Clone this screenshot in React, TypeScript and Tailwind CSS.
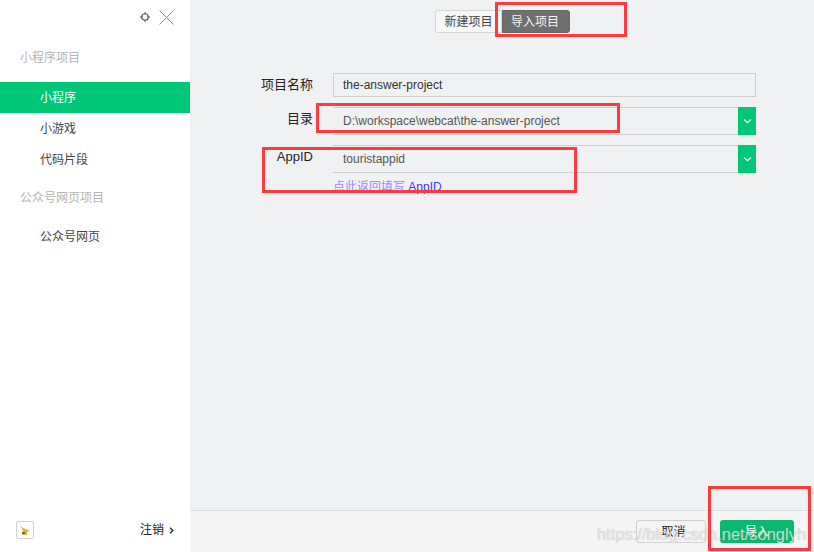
import React from "react";

const font = { fontFamily: '"Liberation Sans", "Noto Sans CJK SC", sans-serif' };

function Chevron() {
  return (
    <div className="-my-px flex w-[18px] shrink-0 items-center justify-center bg-[#00c777]">
      <svg width="9" height="6" viewBox="0 0 9 6" fill="none">
        <path d="M1 1.5 L4.5 4.5 L8 1.5" stroke="#e8fff5" strokeWidth="1.4" />
      </svg>
    </div>
  );
}

function Row({ label, children, className }: { label: string; children: React.ReactNode; className?: string }) {
  return (
    <div className={`flex ${className ?? ""}`}>
      <div className="w-[313px] shrink-0 text-right text-[13px] leading-[24px] text-[#222]">{label}</div>
      <div className="ml-5 w-[423px]">{children}</div>
    </div>
  );
}

function RedBox({ className }: { className: string }) {
  return <div className={`pointer-events-none absolute border-[3px] border-[#fd3a3d] ${className}`} />;
}

export default function App() {
  return (
    <div style={font} className="relative flex h-[552px] w-[814px] overflow-hidden bg-[#f0f1f3]">
      <aside className="flex w-[190px] shrink-0 flex-col bg-white">
        <div className="flex h-[33px] items-start justify-end pr-[16px] pt-[10px]">
          <svg className="mr-[9px] mt-[2px]" width="10" height="10" viewBox="0 0 10 10" fill="none" stroke="#4d4d4d">
            <rect x="2" y="2" width="6" height="6" rx="2" strokeWidth="1.2" />
            <path d="M5 0V2 M5 8V10 M0 5H2 M8 5H10" strokeWidth="1" />
          </svg>
          <svg width="15" height="15" viewBox="0 0 15 15" fill="none" stroke="#8c8c8c">
            <path d="M0.5 0.5 L14.5 14.5 M14.5 0.5 L0.5 14.5" strokeWidth="1" />
          </svg>
        </div>
        <div className="mt-[17px] pl-5 text-xs leading-4 text-[#b4b4b4]">小程序项目</div>
        <div className="mt-[16px] flex h-[31px] items-center bg-[#00c777] pl-10 text-xs text-white">小程序</div>
        <div className="flex h-[31px] items-center pl-10 text-xs text-[#444]">小游戏</div>
        <div className="flex h-[31px] items-center pl-10 text-xs text-[#444]">代码片段</div>
        <div className="mt-[15px] pl-5 text-xs leading-4 text-[#b4b4b4]">公众号网页项目</div>
        <div className="mt-[23px] pl-10 text-xs leading-4 text-[#444]">公众号网页</div>
        <div className="mt-auto flex h-[44px] items-center pl-4 pr-[16px]">
          <div className="flex h-[18px] w-[18px] items-center justify-center rounded-[2px] border border-[#d0d0d0]">
            <svg width="12" height="11" viewBox="0 0 12 11">
              <path d="M1 0 L4 3 L7 4 L11 6 L8 7 L8 10 L3 10 L4 6 Z" fill="#d8b24a" />
              <path d="M3 7 L6 7 L6 9 L3 9 Z" fill="#8a6a2a" />
            </svg>
          </div>
          <span className="ml-auto text-xs text-[#222]">注销</span>
          <svg className="ml-[5px]" width="5" height="7" viewBox="0 0 5 7" fill="none">
            <path d="M1 0.8 L3.8 3.5 L1 6.2" stroke="#222" strokeWidth="1.3" />
          </svg>
        </div>
      </aside>

      <main className="relative flex min-w-0 flex-1 flex-col">
        <div className="ml-[245px] mt-[10px] flex h-[23px] w-[135px] text-xs">
          <div className="flex w-[67px] items-center justify-center rounded-l-[3px] border border-[#d6d6d6] bg-[#f7f7f7] text-[#444]">新建项目</div>
          <div className="flex w-[68px] items-center justify-center rounded-r-[3px] border border-[#666] bg-[#6f6f6f] pr-[2px] text-[#f4f4f4]">导入项目</div>
        </div>
      </main>

      <div className="absolute left-0 top-[73px] flex w-[756px] flex-col">
        <Row label="项目名称">
          <div className="flex h-6 items-center border border-[#d0d0d0] pl-[9px] text-xs text-[#333]">the-answer-project</div>
        </Row>
        <Row label="目录" className="mt-[10px]">
          <div className="flex h-[28px] items-stretch border-y border-[#d0d0d0] pl-[10px] text-xs text-[#555]">
            <span className="flex-1 self-center">D:\workspace\webcat\the-answer-project</span>
            <Chevron />
          </div>
        </Row>
        <Row label="AppID" className="mt-[10px]">
          <div className="flex h-[28px] items-stretch border-y border-[#d0d0d0] pl-[10px] text-xs text-[#555]">
            <span className="flex-1 self-center">touristappid</span>
            <Chevron />
          </div>
          <div className="mt-[6px] text-xs leading-4 text-[#3a3aff]"><span className="text-[#8f8fff]">点此返回填写</span> AppID</div>
        </Row>
      </div>

      <footer className="absolute bottom-0 left-[190px] right-0 flex h-[42px] items-start justify-end border-t border-[#dfdfdf] bg-[#f5f5f5] pr-5 pt-[9px] text-xs">
        <div className="flex h-[23px] w-[70px] items-center justify-center rounded-[3px] border border-[#d0d0d0] pl-[5px] text-[#222]">取消</div>
        <div className="ml-[14px] flex h-[23px] w-[74px] items-center justify-center rounded-[3px] bg-[#0ab96f] text-white">导入</div>
      </footer>

      <div className="pointer-events-none absolute left-[597px] top-[525px] text-[16.5px] leading-[18px] text-white/70 [text-shadow:0_0_1px_rgba(110,110,110,0.6)]">https://blog.csdn.net/songlyh</div>

      <RedBox className="left-[495px] top-[2px] h-[35px] w-[132px]" />
      <RedBox className="left-[316px] top-[103px] h-[30px] w-[304px]" />
      <RedBox className="left-[262px] top-[147px] h-[46px] w-[315px]" />
      <RedBox className="left-[708px] top-[486px] h-[65px] w-[103px]" />
    </div>
  );
}
